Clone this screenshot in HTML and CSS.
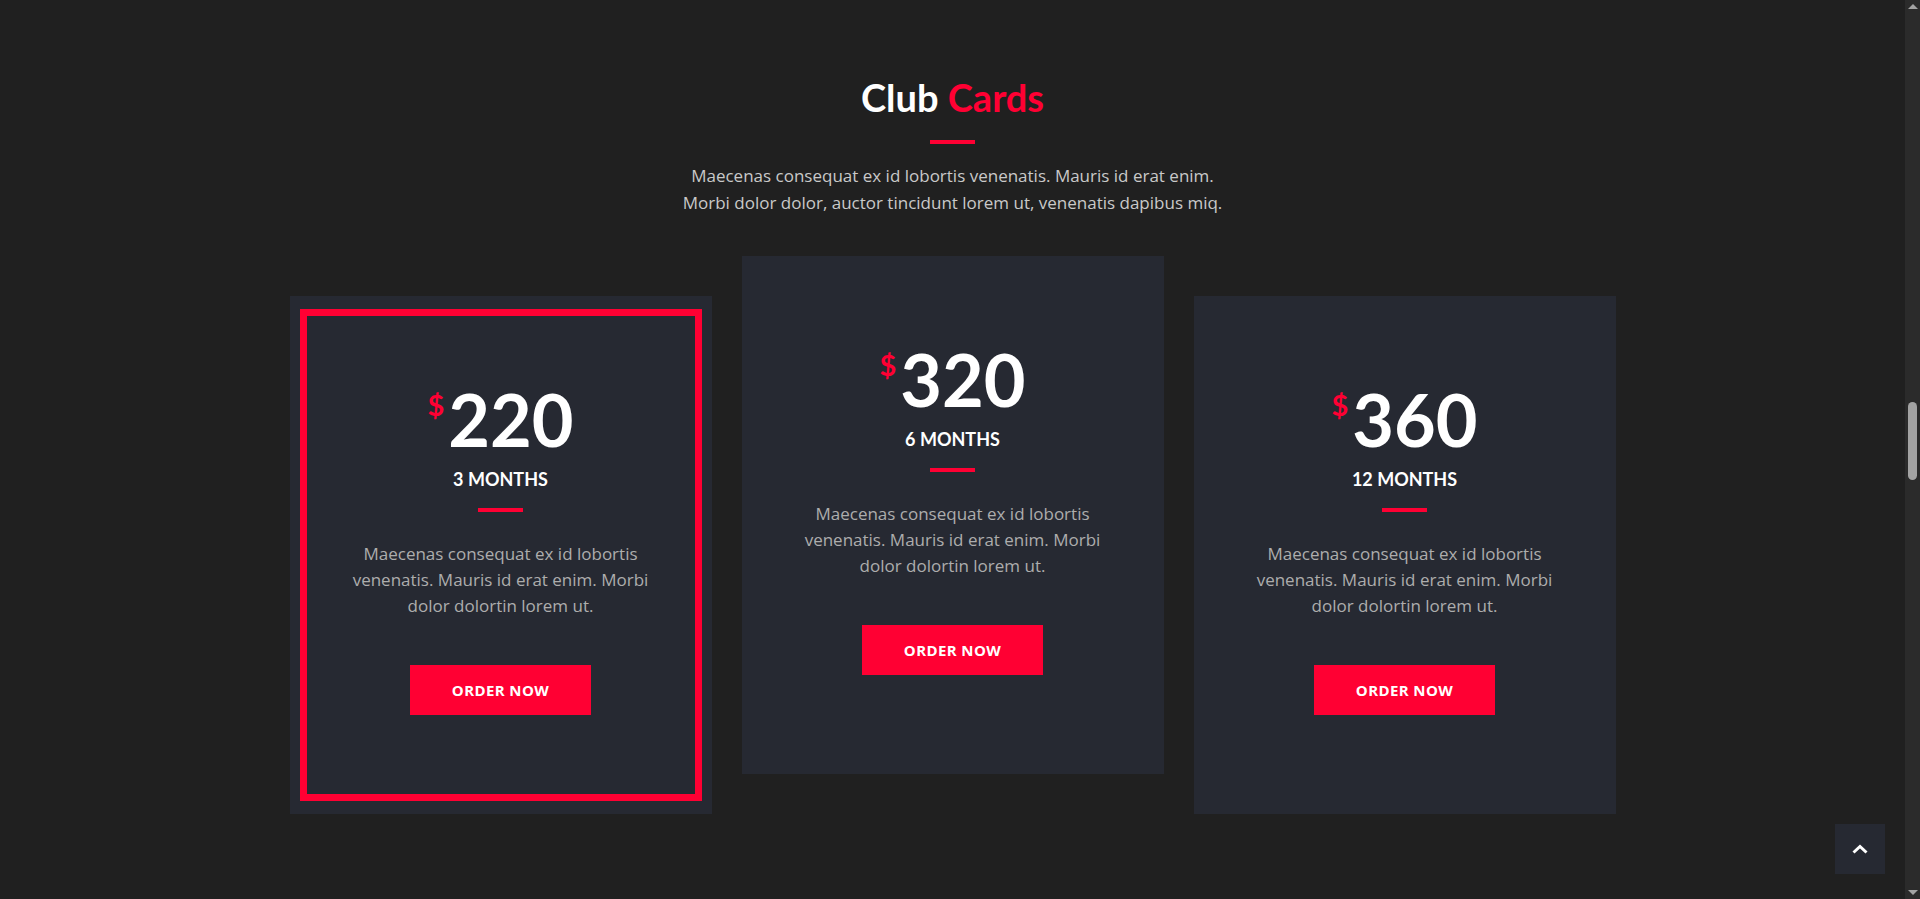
FILE: index.html
```html
<!DOCTYPE html>
<html lang="en">
<head>
<meta charset="utf-8">
<title>Club Cards</title>
<link rel="stylesheet" href="styles.css">
</head>
<body>
<div class="page">
  <section class="club">
    <h2 class="club-title">Club <span class="accent">Cards</span></h2>
    <div class="rule"></div>
    <p class="club-intro">Maecenas consequat ex id lobortis venenatis. Mauris id erat enim.<br>Morbi dolor dolor, auctor tincidunt lorem ut, venenatis dapibus miq.</p>

    <div class="cards">
      <div class="card card-active">
        <div class="price"><span class="currency">$</span>220</div>
        <div class="period">3 MONTHS</div>
        <div class="rule rule-small"></div>
        <p class="card-text">Maecenas consequat ex id lobortis venenatis. Mauris id erat enim. Morbi dolor dolortin lorem ut.</p>
        <a class="btn" href="#">ORDER NOW</a>
      </div>
      <div class="card card-raised">
        <div class="price"><span class="currency">$</span>320</div>
        <div class="period">6 MONTHS</div>
        <div class="rule rule-small"></div>
        <p class="card-text">Maecenas consequat ex id lobortis venenatis. Mauris id erat enim. Morbi dolor dolortin lorem ut.</p>
        <a class="btn" href="#">ORDER NOW</a>
      </div>
      <div class="card">
        <div class="price"><span class="currency">$</span>360</div>
        <div class="period">12 MONTHS</div>
        <div class="rule rule-small"></div>
        <p class="card-text">Maecenas consequat ex id lobortis venenatis. Mauris id erat enim. Morbi dolor dolortin lorem ut.</p>
        <a class="btn" href="#">ORDER NOW</a>
      </div>
    </div>
  </section>
</div>
<div class="scrollbar">
  <span class="arrow arrow-up"></span>
  <span class="thumb"></span>
  <span class="arrow arrow-down"></span>
</div>
<a class="to-top" href="#" aria-label="Back to top">
  <svg width="16" height="10" viewBox="0 0 16 10"><polyline points="1.5,8.5 8,2.5 14.5,8.5" fill="none" stroke="#fff" stroke-width="3" stroke-linecap="butt"/></svg>
</a>
</body>
</html>
```

FILE: styles.css
```css
html, body {
  margin: 0;
  height: 100%;
  overflow: hidden;
}
body {
  display: flex;
  background: #202020;
  font-family: "Open Sans", "Liberation Sans", sans-serif;
  color: #fff;
}
.page {
  flex: 1;
  height: 100vh;
  overflow: hidden;
}
.club {
  padding-top: 74px;
  text-align: center;
}
.club-title {
  margin: 0;
  font-family: Lato, "Liberation Sans", sans-serif;
  font-weight: 700;
  font-size: 38px;
  line-height: 46px;
  color: #fff;
}
.accent { color: #ff0033; }
.rule {
  width: 45px;
  height: 4px;
  margin: 20px auto 0;
  background: #ff0033;
}
.club-intro {
  margin: 18px 0 0;
  font-size: 17px;
  line-height: 27px;
  color: #c9c9c9;
}
.cards {
  display: flex;
  justify-content: center;
  align-items: flex-start;
  gap: 30px;
  margin-top: 80px;
}
.card {
  position: relative;
  width: 422px;
  height: 518px;
  box-sizing: border-box;
  padding-top: 87px;
  background: #262932;
}
.card-raised { transform: translateY(-40px); }
.card-active::before {
  content: "";
  position: absolute;
  inset: 13px 10px;
  border: 7px solid #ff0033;
}
.price {
  font-family: Lato, "Liberation Sans", sans-serif;
  font-weight: 700;
  font-size: 72px;
  line-height: 72px;
  color: #fff;
}
.currency {
  font-size: 29px;
  line-height: 1;
  color: #ff0033;
  vertical-align: 31px;
  margin-right: 4px;
}
.period {
  margin-top: 12px;
  font-family: Lato, "Liberation Sans", sans-serif;
  font-weight: 700;
  font-size: 18px;
  line-height: 24px;
}
.rule-small { margin-top: 17px; }
.card-text {
  width: 312px;
  margin: 29px auto 0;
  font-size: 17px;
  line-height: 26px;
  color: #adadad;
}
.btn {
  display: inline-block;
  margin-top: 46px;
  width: 181px;
  height: 50px;
  line-height: 50px;
  background: #ff0033;
  color: #fff;
  font-size: 15px;
  letter-spacing: 0.4px;
  font-weight: 700;
  text-decoration: none;
}
.scrollbar {
  width: 15px;
  height: 100vh;
  background: #2b2b2b;
  display: flex;
  flex-direction: column;
  align-items: center;
}
.arrow {
  width: 0;
  height: 0;
  border-left: 5px solid transparent;
  border-right: 5px solid transparent;
}
.arrow-up {
  margin-top: 4px;
  border-bottom: 5px solid #a3a3a3;
}
.thumb {
  width: 9px;
  height: 78px;
  margin-top: 393px;
  border-radius: 5px;
  background: #a3a3a3;
}
.arrow-down {
  margin-top: auto;
  margin-bottom: 4px;
  border-top: 5px solid #a3a3a3;
}
.to-top {
  position: fixed;
  right: 35px;
  bottom: 25px;
  width: 50px;
  height: 50px;
  display: flex;
  align-items: center;
  justify-content: center;
  background: #262932;
}
```
